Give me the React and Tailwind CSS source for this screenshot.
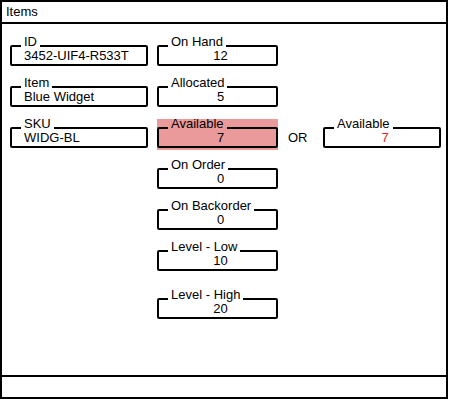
// Item stock wireframe: identity fields on the left, quantities in the middle

import React from "react";

const identity = [
    { label: "ID", value: "3452-UIF4-R533T" },
    { label: "Item", value: "Blue Widget" },
    { label: "SKU", value: "WIDG-BL" },
];

const stock = [
    { label: "On Hand", value: "12" },
    { label: "Allocated", value: "5" },
    { label: "Available", value: "7", highlight: true },
    { label: "On Order", value: "0" },
    { label: "On Backorder", value: "0" },
    { label: "Level - Low", value: "10" },
    { label: "Level - High", value: "20", extraGap: true },
];

function Field({ label, value, left, highlight, red, extraGap }) {
    return (
        <div
            className={`relative pt-[8px] ${highlight ? "bg-[#ea9a9a] pb-[2px] -mb-[2px]" : ""} ${extraGap ? "mt-[7px]" : ""}`}
        >
            <span
                className={`absolute left-[11px] top-0 px-[3px] h-[10px] leading-[10px] ${highlight ? "bg-[#ea9a9a]" : "bg-white"}`}
            >
                {label}
            </span>
            <div
                className={`h-[21px] border-2 border-black rounded-[2px] leading-[17px] ${left ? "pl-[12px]" : "text-center pl-[6px]"} ${red ? "text-[#e0282a]" : ""}`}
            >
                {value}
            </div>
        </div>
    );
}

export default function App() {
    return (
        <div className="w-[450px] h-[400px] bg-white font-['Liberation_Sans',Arial,sans-serif] text-[13px] text-black">
            <div className="w-[448px] h-[399px] border-2 border-black flex flex-col">
                <div className="h-[22px] border-b-2 border-black pl-[4px] leading-[20px]">Items</div>

                <div className="flex-1 flex pl-[8px] pt-[13px]">
                    <div className="w-[138px] flex flex-col gap-[12px]">
                        {identity.map((f) => (
                            <Field key={f.label} {...f} left />
                        ))}
                    </div>

                    <div className="w-[121px] ml-[9px] flex flex-col gap-[12px]">
                        {stock.map((f) => (
                            <Field key={f.label} {...f} />
                        ))}
                    </div>

                    <div className="mt-[82px] flex items-end self-start">
                        <span className="ml-[10px] w-[35px] h-[21px] leading-[21px]">OR</span>
                        <div className="w-[118px]">
                            <Field label="Available" value="7" red />
                        </div>
                    </div>
                </div>

                <div className="h-[22px] border-t-2 border-black"></div>
            </div>
        </div>
    );
}
